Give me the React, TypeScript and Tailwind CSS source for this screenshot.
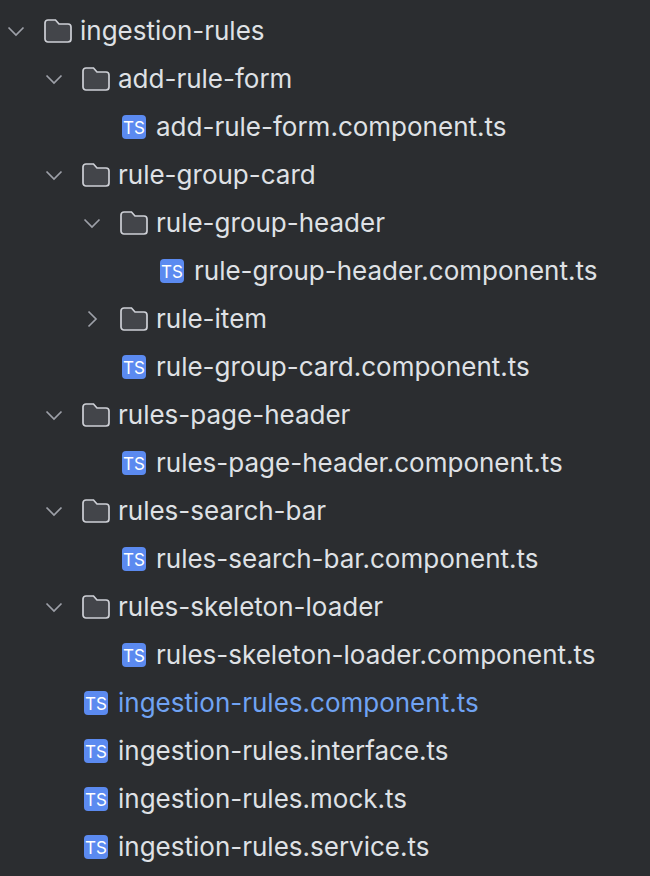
const ROWS = [
  { name: "ingestion-rules", depth: "pl-0", kind: "open" },
  { name: "add-rule-form", depth: "pl-[38px]", kind: "open" },
  { name: "add-rule-form.component.ts", depth: "pl-[76px]", kind: "file" },
  { name: "rule-group-card", depth: "pl-[38px]", kind: "open" },
  { name: "rule-group-header", depth: "pl-[76px]", kind: "open" },
  { name: "rule-group-header.component.ts", depth: "pl-[114px]", kind: "file" },
  { name: "rule-item", depth: "pl-[76px]", kind: "closed" },
  { name: "rule-group-card.component.ts", depth: "pl-[76px]", kind: "file" },
  { name: "rules-page-header", depth: "pl-[38px]", kind: "open" },
  { name: "rules-page-header.component.ts", depth: "pl-[76px]", kind: "file" },
  { name: "rules-search-bar", depth: "pl-[38px]", kind: "open" },
  { name: "rules-search-bar.component.ts", depth: "pl-[76px]", kind: "file" },
  { name: "rules-skeleton-loader", depth: "pl-[38px]", kind: "open" },
  { name: "rules-skeleton-loader.component.ts", depth: "pl-[76px]", kind: "file" },
  { name: "ingestion-rules.component.ts", depth: "pl-[38px]", kind: "file", active: true },
  { name: "ingestion-rules.interface.ts", depth: "pl-[38px]", kind: "file" },
  { name: "ingestion-rules.mock.ts", depth: "pl-[38px]", kind: "file" },
  { name: "ingestion-rules.service.ts", depth: "pl-[38px]", kind: "file" },
];

function Chevron({ open }: { open: boolean }) {
  return (
    <svg width="20" height="20" viewBox="0 0 20 20" fill="none" stroke="#9da0a8" strokeWidth="1.7">
      <path d={open ? "M2.5 6.5 L10 14 L17.5 6.5" : "M6.5 2.5 L14 10 L6.5 17.5"} />
    </svg>
  );
}

function FolderIcon() {
  return (
    <svg width="28" height="24" viewBox="0 0 28 24" fill="none">
      <path
        d="M1 4 A3 3 0 0 1 4 1 H11.5 L15 5 H24 A3 3 0 0 1 27 8 V20 A3 3 0 0 1 24 23 H4 A3 3 0 0 1 1 20 Z"
        fill="#43454a"
        stroke="#ced0d6"
        strokeWidth="1.7"
      />
    </svg>
  );
}

function TsIcon() {
  return (
    <div className="flex h-6 w-6 items-end justify-center rounded-[4px] bg-[#5b8af0] pb-[2px] font-['Inter',sans-serif] text-[17px] leading-[18px] font-normal text-white">
      TS
    </div>
  );
}

export default function App() {
  return (
    <div className="h-[876px] w-[650px] overflow-hidden bg-[#2b2d30] pt-[7px] font-['Inter',sans-serif] text-[26px] text-[#dfe1e5]">
      {ROWS.map((r) => (
        <div key={r.name} className={`flex h-12 items-center ${r.depth}`}>
          <div className="flex w-8 shrink-0 justify-center">
            {r.kind !== "file" && <Chevron open={r.kind === "open"} />}
          </div>
          {r.kind === "file" ? (
            <div className="flex w-12 shrink-0 justify-end pr-[10px]">
              <TsIcon />
            </div>
          ) : (
            <div className="flex w-12 shrink-0 justify-end pr-2">
              <FolderIcon />
            </div>
          )}
          <span className={`whitespace-nowrap pb-[2px] ${r.active ? "text-[#70a3f3]" : ""}`}>{r.name}</span>
        </div>
      ))}
    </div>
  );
}
